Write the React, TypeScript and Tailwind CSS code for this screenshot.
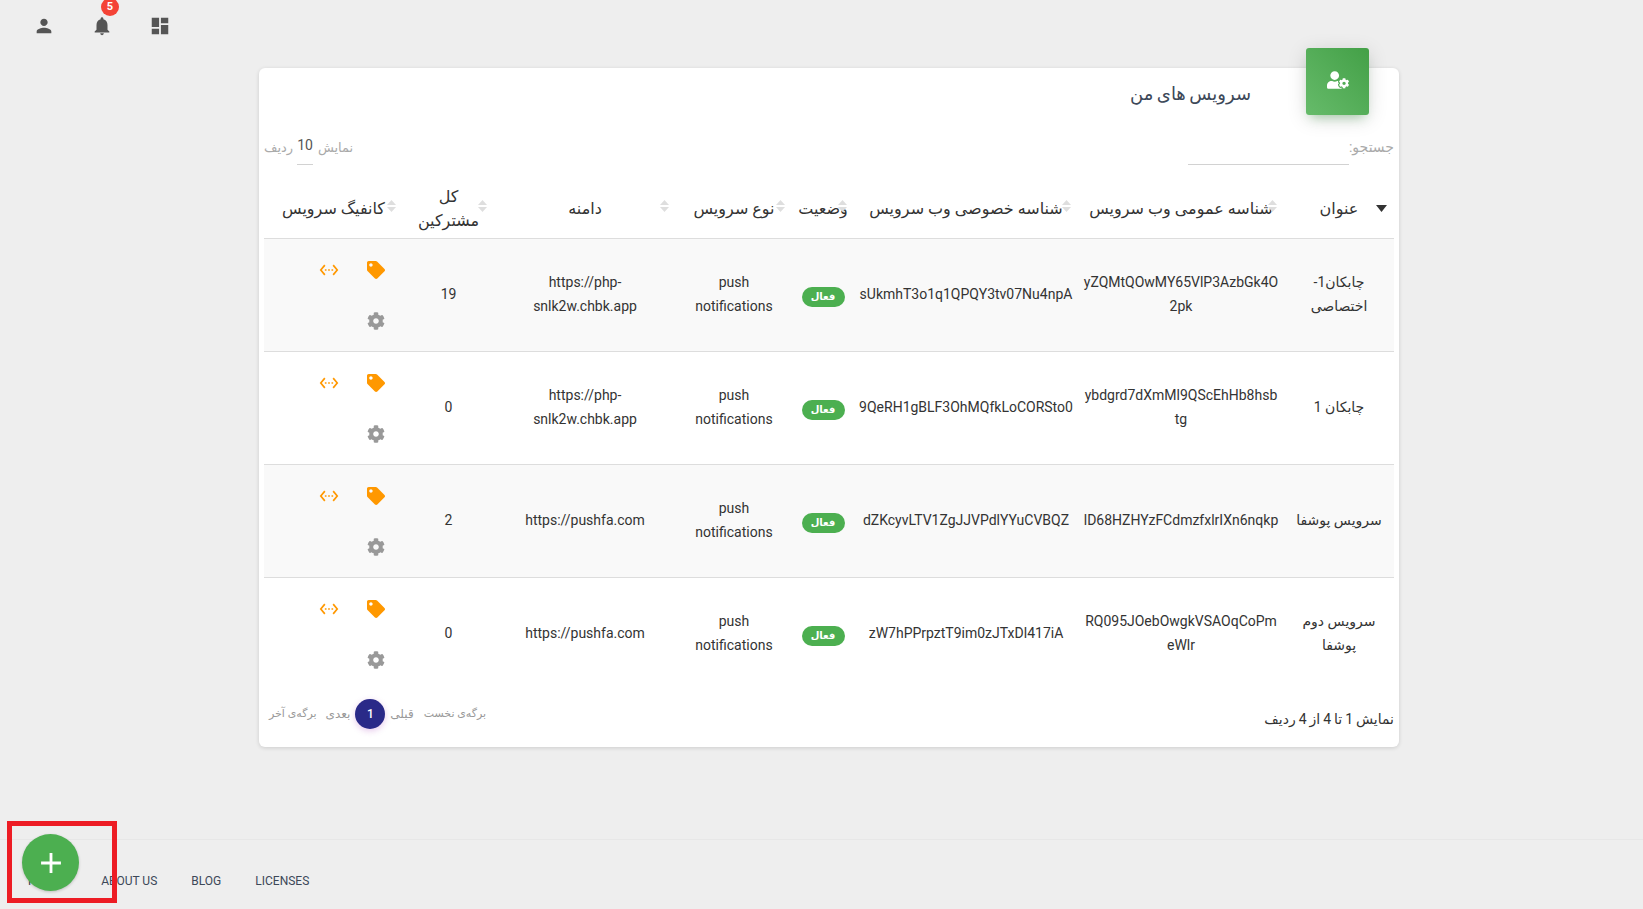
import React from "react";
import { MdPerson, MdNotifications, MdDashboard, MdSettingsEthernet, MdAdd } from "react-icons/md";
import { FaUserCog, FaTag, FaCog } from "react-icons/fa";

const rows = [
  { title: "چابکان1- اختصاصی", pub: "yZQMtQOwMY65VlP3AzbGk4O2pk", priv: "sUkmhT3o1q1QPQY3tv07Nu4npA", domain: "https://php-snlk2w.chbk.app", total: "19" },
  { title: "چابکان 1", pub: "ybdgrd7dXmMl9QScEhHb8hsbtg", priv: "9QeRH1gBLF3OhMQfkLoCORSto0", domain: "https://php-snlk2w.chbk.app", total: "0" },
  { title: "سرویس پوشفا", pub: "lD68HZHYzFCdmzfxlrIXn6nqkp", priv: "dZKcyvLTV1ZgJJVPdlYYuCVBQZ", domain: "https://pushfa.com", total: "2" },
  { title: "سرویس دوم پوشفا", pub: "RQ095JOebOwgkVSAOqCoPmeWlr", priv: "zW7hPPrpztT9im0zJTxDl417iA", domain: "https://pushfa.com", total: "0" },
];

const heads = [
  { label: "شناسه عمومی وب سرویس", w: "w-[206px] px-[10px]" },
  { label: "شناسه خصوصی وب سرویس", w: "w-[224px] px-[10px]" },
  { label: "وضعیت", w: "w-[62px] px-0" },
  { label: "نوع سرویس", w: "w-[116px] px-[10px]" },
  { label: "دامنه", w: "w-[182px] px-[10px]" },
  { label: "کل مشترکین", w: "w-[91px] px-[10px]" },
  { label: "کانفیگ سرویس", w: "w-[139px] px-[10px]" },
];

function SortIcon() {
  return (
    <svg className="absolute right-[7px] top-[32px]" width="9" height="12" viewBox="0 0 9 12" fill="#dedede">
      <path d="M4.5 0L9 5H0z" />
      <path d="M4.5 12L0 7h9z" />
    </svg>
  );
}

export default function App() {
  return (
    <div className="relative h-[909px] overflow-hidden bg-[#eeeeee] font-['Roboto','DejaVu_Sans',sans-serif] text-[#333333]">
      <nav dir="ltr" className="flex h-[52px] items-center pl-[15px] text-[#555555]">
        <span className="flex w-[58px] justify-center"><MdPerson size={22} /></span>
        <span className="relative flex w-[58px] justify-center">
          <MdNotifications size={22} />
          <span className="absolute left-[28px] top-[-17px] flex h-[18px] w-[18px] items-center justify-center rounded-full bg-[#f44336] text-[11px] font-bold text-white">5</span>
        </span>
        <span className="flex w-[58px] justify-center"><MdDashboard size={22} /></span>
      </nav>

      <main dir="rtl" className="relative ml-[259px] mt-[16px] h-[679px] w-[1140px] rounded-[6px] bg-white px-[5px] shadow-[0_1px_4px_rgba(0,0,0,0.14)]">
        <div className="absolute right-[30px] top-[-20px] flex h-[67px] w-[63px] items-center justify-center rounded-[3px] bg-gradient-to-tr from-[#66bb6a] to-[#43a047] pb-[4px] text-white shadow-[0_4px_20px_rgba(0,0,0,0.14),0_7px_10px_-5px_rgba(76,175,80,0.4)]">
          <FaUserCog size={22} />
        </div>

        <h2 className="mr-[143px] flex h-[52px] items-center pb-[2px] text-[18px] font-normal text-[#3c4858] [word-spacing:-1px]">سرویس های من</h2>

        <div className="flex h-[45px] items-end justify-between text-[14px] text-[#aaaaaa]">
          <label className="flex items-end">
            <span className="mb-[7px]">جستجو:</span>
            <span className="block h-[30px] w-[161px] border-b border-[#d2d2d2]" />
          </label>
          <label className="flex items-end text-[13px]">
            <span className="mb-[8px] ml-[5px]">نمایش</span>
            <span className="ml-[4px] block border-b border-[#d2d2d2] pb-[8px] text-[14px] text-[#555555]">10</span>
            <span className="mb-[8px]">ردیف</span>
          </label>
        </div>

        <table className="mt-[3px] w-[1130px] table-fixed border-collapse text-center text-[14px]">
          <thead>
            <tr className="h-[70px] border-b border-[#dddddd] text-[16px] leading-[24px]">
              <th className="relative w-[110px] px-[5px] pt-[12px] font-normal">
                <svg className="absolute right-[7px] top-[37px]" width="11" height="7" viewBox="0 0 11 7" fill="#333333"><path d="M0 0h11L5.5 7z" /></svg>
                عنوان
              </th>
              {heads.map((h) => (
                <th key={h.label} className={`relative ${h.w} pt-[12px] font-normal`}>
                  <SortIcon />
                  {h.label}
                </th>
              ))}
            </tr>
          </thead>
          <tbody className="leading-[24px]">
            {rows.map((r, i) => (
              <tr key={r.pub} className={`h-[113px] ${i < 3 ? "border-b border-[#dddddd]" : ""} ${i % 2 === 0 ? "bg-[#f9f9f9]" : "bg-white"}`}>
                <td className="px-[10px] pb-[2px]">{r.title}</td>
                <td className="break-all px-[5px] pb-[2px]">{r.pub}</td>
                <td className="px-[2px] pb-[2px]">{r.priv}</td>
                <td className="px-0">
                  <span className="inline-flex h-[20px] w-[43px] items-center justify-center rounded-full bg-[#4caf50] text-[10px] font-bold text-white">فعال</span>
                </td>
                <td className="px-[5px] pb-[2px]">push notifications</td>
                <td className="px-[20px] pb-[2px]"><span dir="ltr">{r.domain}</span></td>
                <td className="px-[5px] pb-[2px]">{r.total}</td>
                <td className="px-0">
                  <div className="flex h-[104px] w-[92px] flex-wrap content-start pr-[18px] pt-[2px] text-[#ff9800]">
                    <span className="flex h-[51px] w-[46px] items-center justify-start"><FaTag size={18} /></span>
                    <span className="flex h-[51px] w-[20px] items-center justify-center"><MdSettingsEthernet size={22} /></span>
                    <span className="flex h-[51px] w-[46px] items-center justify-start text-[#999999]"><FaCog size={18} /></span>
                  </div>
                </td>
              </tr>
            ))}
          </tbody>
        </table>

        <div className="mt-[4px] flex items-start justify-between">
          <div className="pt-[15px] text-[14px] text-[#333333] [word-spacing:-0.5px]">نمایش 1 تا 4 از 4 ردیف</div>
          <div className="ml-[5px] flex h-[40px] items-center text-[12px] text-[#999999]">
            <span className="ml-[10px] text-[11px]">برگه‌ی نخست</span>
            <span className="ml-[5px]">قبلی</span>
            <span dir="ltr" className="ml-[5px] flex h-[30px] w-[30px] items-center justify-center rounded-full bg-[#2a2a88] font-medium text-white shadow-[0_2px_6px_rgba(156,39,176,0.25)]">1</span>
            <span className="ml-[9px]">بعدی</span>
            <span className="text-[11px]">برگه‌ی آخر</span>
          </div>
        </div>
      </main>

      <footer className="mt-[92px] flex h-[71px] items-start gap-[34px] border-t border-[#e7e7e7] pl-[28px] pt-[33px] text-[12px] uppercase leading-[16px] text-[#3c4858]">
        <a className="mr-[5px]">Home</a>
        <a>About Us</a>
        <a>Blog</a>
        <a>Licenses</a>
      </footer>

      <button className="absolute left-[22px] top-[834px] flex h-[57px] w-[57px] items-center justify-center rounded-full bg-[#4caf50] text-white shadow-[0_1px_3px_rgba(0,0,0,0.2)]">
        <MdAdd size={34} />
      </button>
      <div className="pointer-events-none absolute left-[7px] top-[821px] h-[82px] w-[110px] border-[5px] border-[#ed1c24]" />
    </div>
  );
}
